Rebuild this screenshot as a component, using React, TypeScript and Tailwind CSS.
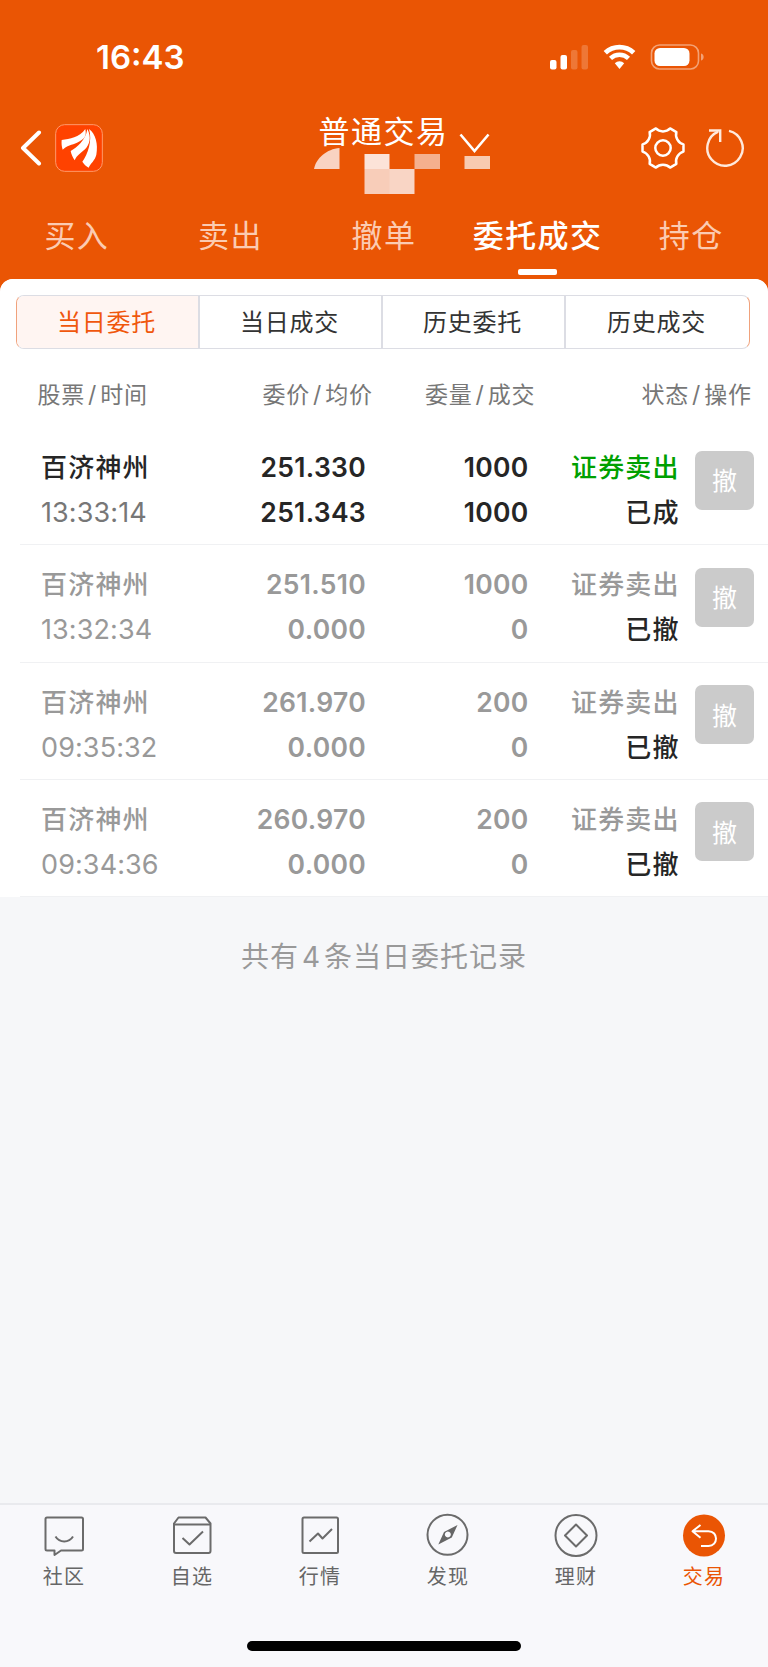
import React from "react";
import clsx from "clsx";

const topTabs = ["买入", "卖出", "撤单", "委托成交", "持仓"];
const segments = ["当日委托", "当日成交", "历史委托", "历史成交"];

const orders = [
  { name: "百济神州", time: "13:33:14", price: "251.330", avg: "251.343", qty: "1000", filled: "1000", status: "已成", done: true },
  { name: "百济神州", time: "13:32:34", price: "251.510", avg: "0.000", qty: "1000", filled: "0", status: "已撤", done: false },
  { name: "百济神州", time: "09:35:32", price: "261.970", avg: "0.000", qty: "200", filled: "0", status: "已撤", done: false },
  { name: "百济神州", time: "09:34:36", price: "260.970", avg: "0.000", qty: "200", filled: "0", status: "已撤", done: false },
];

function StatusBar() {
  return (
    <div className="flex h-[114px] items-center justify-between pl-24 pr-16">
      <span className="text-[33px] font-semibold leading-none">16:43</span>
      <svg width="155" height="28" viewBox="0 0 155 28" fill="#fff">
        <rect x="1" y="17" width="6.5" height="9.5" rx="2" />
        <rect x="11.5" y="12" width="6.5" height="14.5" rx="2" />
        <rect x="22" y="7" width="6.5" height="19.5" rx="2" opacity=".2" />
        <rect x="32.5" y="2" width="6.5" height="24.5" rx="2" opacity=".2" />
        <path d="M56.3 9.8a20.5 20.5 0 0 1 28.4 0" fill="none" stroke="#fff" strokeWidth="4.8" />
        <path d="M61.5 15.3a13 13 0 0 1 18 0" fill="none" stroke="#fff" strokeWidth="4.4" />
        <path d="M65.8 20.2a6.8 6.8 0 0 1 9.4 0l-4.7 5.8z" />
        <rect x="102.5" y="2" width="47" height="24" rx="8" fill="none" stroke="#fff" strokeWidth="1.6" opacity=".45" />
        <rect x="105.5" y="5" width="35" height="18" rx="5.5" />
        <path d="M152 10.5c2.2.6 2.6 2 2.6 3.5s-.4 2.9-2.6 3.5z" opacity=".45" />
      </svg>
    </div>
  );
}

function AppLogo() {
  return (
    <svg width="48" height="48" viewBox="0 0 144 144">
      <rect x="2" y="2" width="140" height="140" rx="27" fill="#ff4200" stroke="#ff9a6c" strokeWidth="3" />
      <g fill="#fff">
        <path d="M20 48C45 44 72 42 91 15C96 40 86 46 66 56C52 62 34 65 23 77C20 68 19 58 20 48Z" />
        <path d="M47 81C65 70 92 50 97 15C110 40 104 62 90 76C78 87 66 93 59 109C53 100 49 91 47 81Z" />
        <path d="M82 113C98 92 113 50 102 15C122 30 130 60 124 92C120 110 106 118 101 131C93 126 87 121 82 113Z" />
      </g>
    </svg>
  );
}

function TitleBar() {
  return (
    <div className="relative flex h-[68px] items-center justify-between pl-5 pr-[23px]">
      <div className="flex items-center gap-[13px]">
        <svg width="22" height="36" viewBox="0 0 22 36" fill="none" stroke="#fff" strokeWidth="4" strokeLinecap="round" strokeLinejoin="round">
          <path d="M19 2.5 3 18l16 15.5" />
        </svg>
        <AppLogo />
      </div>
      <div className="flex items-center gap-5">
        <svg width="44" height="44" viewBox="-22 -22 44 44" fill="none" stroke="#fff" strokeWidth="2.5" strokeLinejoin="round">
          <path d="M20.48 3.61C15.22 4.94 11.89 10.71 13.37 15.93L7.11 19.55C3.33 15.65-3.33 15.65-7.11 19.55L-13.37 15.93C-11.89 10.71-15.22 4.94-20.48 3.61V-3.61C-15.22-4.94-11.89-10.71-13.37-15.93L-7.11-19.55C-3.33-15.65 3.33-15.65 7.11-19.55L13.37-15.93C11.89-10.71 15.22-4.94 20.48-3.61Z" />
          <circle r="7.7" />
        </svg>
        <svg width="40" height="40" viewBox="-20 -20 40 40" fill="none" stroke="#ffe9dc" strokeWidth="2.4">
          <path d="M4-17.2A17.7 17.7 0 1 1-6.8-16.3" />
          <path d="M-16-17.5H-4.8V-6" />
        </svg>
      </div>

      {/* Account selector, second line is pixelated */}
      <div className="absolute left-[318.5px] top-px flex items-start">
        <h1 className="text-[31px] leading-[34px] tracking-[1.5px]">普通交易</h1>
        <svg className="ml-2.5 mt-[18px]" width="31" height="20" viewBox="0 0 31 20" fill="none" stroke="#fff" strokeWidth="2.6">
          <path d="M1.5 1.5 15.5 18 29.5 1.5" />
        </svg>
      </div>
      <svg className="absolute left-[314px] top-[34px]" width="176" height="47" viewBox="0 0 176 47">
        <path d="M0 21C2 10 13 1 25.5 0V21Z" fill="#f9d3c2" />
        <path d="M50.5 6h25v15h-25z" fill="#fce3d8" />
        <path d="M50.5 21h25.5v25h-25.5z" fill="#f8cdb9" />
        <path d="M75.5 21h25v25h-25z" fill="#f9d5c5" />
        <path d="M100.5 6h25.5v15h-25.5z" fill="#f5b08e" />
        <path d="M150.5 8h25.5v13h-25.5z" fill="#f8cab0" />
      </svg>
    </div>
  );
}

function TopTabs() {
  return (
    <nav className="grid h-[97px] grid-cols-5 pt-[31px]">
      {topTabs.map((tab) => {
        const active = tab === "委托成交";
        return (
          <div key={tab} className="flex flex-col items-center">
            <span
              className={clsx(
                "whitespace-nowrap text-[31px] leading-[46px] tracking-[1.4px]",
                active ? "font-medium text-white" : "text-[#fbcbb2]"
              )}
            >
              {tab}
            </span>
            {active && <span className="mt-2.5 h-1.5 w-[39px] rounded-[2px] bg-white" />}
          </div>
        );
      })}
    </nav>
  );
}

function SegmentControl() {
  return (
    <div className="ml-4 mr-[18px] grid h-[54px] grid-cols-4 overflow-hidden rounded-[8px] border border-[#dcdde4] [border-left-color:#f0a27c] [border-right-color:#f0a27c]">
      {segments.map((label, i) => (
        <div
          key={label}
          className={clsx(
            "flex items-center justify-center pr-0.5 pt-0.5 text-[24px] tracking-[0.8px]",
            i < 3 && "border-r-2 border-[#dcdde4]",
            i === 0 ? "bg-[#fff5f2] text-[#f0570c]" : "text-[#333]"
          )}
        >
          {label}
        </div>
      ))}
    </div>
  );
}

function HeadCell({ a, b, className }: { a: string; b: string; className: string }) {
  return (
    <div className={clsx("flex whitespace-nowrap", className)}>
      <span>{a}</span>
      <span className="px-[3px]">/</span>
      <span>{b}</span>
    </div>
  );
}

function OrderRow({ order }: { order: (typeof orders)[number] }) {
  const main = order.done ? "text-[#262626]" : "text-[#999]";
  return (
    <div className="ml-5 flex h-[117.3px] border-b border-[#f0f1f3] pl-[21px] pr-3.5 pt-[17px] text-[26px] leading-[45px]">
      <div className="w-[150px]">
        <div className={clsx("font-medium tracking-[1.2px]", main)}>{order.name}</div>
        <div className={clsx("text-[27px] tracking-[0.1px]", order.done ? "text-[#777]" : "text-[#999]")}>{order.time}</div>
      </div>
      <div className={clsx("w-[175px] text-right text-[26.5px] font-semibold tracking-[0.3px]", main)}>
        <div>{order.price}</div>
        <div>{order.avg}</div>
      </div>
      <div className={clsx("w-[162.5px] text-right text-[26.5px] font-semibold tracking-[0.3px]", main)}>
        <div>{order.qty}</div>
        <div>{order.filled}</div>
      </div>
      <div className="w-[151px] text-right font-medium tracking-[1.1px]">
        <div className={order.done ? "text-[#00a000]" : "text-[#999]"}>证券卖出</div>
        <div className="text-[#262626]">{order.status}</div>
      </div>
      <button className="ml-auto mt-[5.5px] flex h-[59px] w-[59px] items-center justify-center rounded-[7px] bg-[#cbcbcb] pt-[3px] text-[25px] leading-none text-white">
        撤
      </button>
    </div>
  );
}

const bottomTabs = [
  {
    label: "社区",
    icon: (
      <>
        <path d="M5 4.5H39.500Q41 4.500 41 6V36Q41 37.500 39.500 37.500H19L12.500 42V37.500H5Q3.500 37.500 3.500 36V6Q3.500 4.500 5 4.500Z" />
        <path d="M13.500 23.500C17.500 30 27 30 31 23.500" />
      </>
    ),
  },
  {
    label: "自选",
    icon: (
      <>
        <path d="M8.500 4.500H35.500L40.500 10.500V38Q40.500 40 38.500 40H6Q4 40 4 38V10.500Z" />
        <path d="M5 11.500H40M12.500 25 19.500 31.500 33 18.500" />
      </>
    ),
  },
  {
    label: "行情",
    icon: (
      <>
        <rect x="4.5" y="4.5" width="35.5" height="35.5" rx="1.5" />
        <path d="M11.500 28.500 20 20.500 24.500 25.500 34 16" />
      </>
    ),
  },
  {
    label: "发现",
    icon: (
      <>
        <circle cx="21.5" cy="21.8" r="20" />
        <path fillRule="evenodd" fill="#666" stroke="none" d="M31.500 12 25.800 24.500 12.300 31.500 18 19ZM21.800 18.500a3 3 0 1 0 .1 0Z" />
      </>
    ),
  },
  {
    label: "理财",
    icon: (
      <>
        <circle cx="22" cy="22.5" r="20.5" />
        <path d="M22 11.500 33 22.500 22 33.500 11 22.500Z" />
      </>
    ),
  },
  {
    label: "交易",
    icon: (
      <>
        <circle cx="22" cy="22.5" r="21" fill="#ea5504" stroke="none" />
        <path stroke="#fff" d="M18.500 12 10.500 18.200 18.500 24.800M10.500 18.200H26.500C36.500 18.200 36.500 33 26.500 33H19" />
      </>
    ),
  },
];

function BottomBar() {
  return (
    <footer className="flex h-[164px] flex-col items-center border-t-2 border-[#e9eaee] bg-[#f8f8fb]">
      <div className="grid h-[136px] w-full grid-cols-6 pt-2">
        {bottomTabs.map(({ label, icon }) => (
          <div key={label} className={clsx("flex flex-col items-center", label === "交易" ? "text-[#ea5504]" : "text-[#666]")}>
            <svg width="44" height="44" viewBox="0 0 44 44" fill="none" stroke="#6b6b6b" strokeWidth="2" strokeLinejoin="round">
              {icon}
            </svg>
            <span className="mt-1.5 text-[20px] leading-7 tracking-[1.3px]">{label}</span>
          </div>
        ))}
      </div>
      <div className="h-2.5 w-[274px] rounded-full bg-black" />
    </footer>
  );
}

export default function App() {
  return (
    <div className="flex h-[1667px] w-[768px] flex-col overflow-hidden bg-[#ea5504] font-['Inter','Noto_Sans_CJK_SC',sans-serif]">
      <header className="text-white">
        <StatusBar />
        <TitleBar />
        <TopTabs />
      </header>

      <main className="flex flex-1 flex-col overflow-hidden rounded-t-[13px] bg-[#f6f7f9]">
        <section className="bg-white pt-4">
          <SegmentControl />
          <div className="flex h-[79px] items-center pl-[37.5px] pt-3.5 text-[23px] tracking-[0.8px] text-[#777] [&>div]:shrink-0">
            <HeadCell a="股票" b="时间" className="w-[225px]" />
            <HeadCell a="委价" b="均价" className="w-[162.5px]" />
            <HeadCell a="委量" b="成交" className="w-[216.5px]" />
            <HeadCell a="状态" b="操作" className="w-[110px]" />
          </div>
          {orders.map((order) => (
            <OrderRow key={order.time} order={order} />
          ))}
        </section>
        <p className="mt-10 text-center text-[28px] leading-10 tracking-[1px] text-[#999]">
          共有<span className="px-[3px]">4</span>条当日委托记录
        </p>
      </main>

      <BottomBar />
    </div>
  );
}
